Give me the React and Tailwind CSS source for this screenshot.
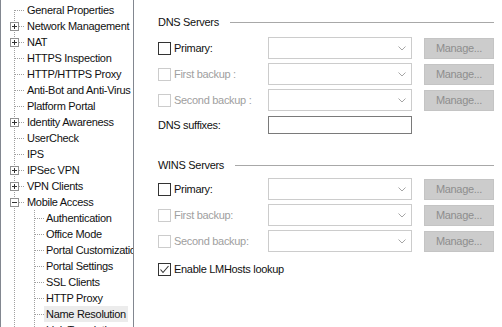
import React from 'react';

const tree = [
  { label: 'General Properties', level: 0, first: true },
  { label: 'Network Management', level: 0, box: '+' },
  { label: 'NAT', level: 0, box: '+' },
  { label: 'HTTPS Inspection', level: 0 },
  { label: 'HTTP/HTTPS Proxy', level: 0 },
  { label: 'Anti-Bot and Anti-Virus', level: 0 },
  { label: 'Platform Portal', level: 0 },
  { label: 'Identity Awareness', level: 0, box: '+' },
  { label: 'UserCheck', level: 0 },
  { label: 'IPS', level: 0 },
  { label: 'IPSec VPN', level: 0, box: '+' },
  { label: 'VPN Clients', level: 0, box: '+' },
  { label: 'Mobile Access', level: 0, box: '-' },
  { label: 'Authentication', level: 1 },
  { label: 'Office Mode', level: 1 },
  { label: 'Portal Customization', level: 1 },
  { label: 'Portal Settings', level: 1 },
  { label: 'SSL Clients', level: 1 },
  { label: 'HTTP Proxy', level: 1 },
  { label: 'Name Resolution', level: 1, selected: true },
  { label: 'Link Translation', level: 1 },
];

const DOT = '#a0a0a0';

function TreeLines({ item }) {
  const w = item.level === 0 ? 24 : 43;
  return (
    <svg width={w} height="16" className="shrink-0" shapeRendering="crispEdges">
      <line x1="13.5" y1={item.first ? 8 : 0} x2="13.5" y2="16" stroke={DOT} strokeDasharray="1 1" />
      {item.level === 1 && (
        <>
          <line x1="33.5" y1="0" x2="33.5" y2="16" stroke={DOT} strokeDasharray="1 1" />
          <line x1="34" y1="8.5" x2="43" y2="8.5" stroke={DOT} strokeDasharray="1 1" />
        </>
      )}
      {item.level === 0 && (
        <line x1={item.box ? 18 : 14} y1="8.5" x2="24" y2="8.5" stroke={DOT} strokeDasharray="1 1" />
      )}
      {item.box && (
        <>
          <rect x="9.5" y="4.5" width="8" height="8" fill="#fff" stroke="#919191" />
          <line x1="11" y1="8.5" x2="16" y2="8.5" stroke="#333" />
          {item.box === '+' && <line x1="13.5" y1="6" x2="13.5" y2="11" stroke="#333" />}
        </>
      )}
    </svg>
  );
}

function Checkbox({ disabled, checked }) {
  return (
    <span
      className={`w-[13px] h-[13px] shrink-0 border bg-white flex items-center justify-center ${
        disabled ? 'border-[#cccccc]' : 'border-[#333333]'
      }`}
    >
      {checked && (
        <svg width="11" height="11" viewBox="0 0 11 11">
          <polyline points="1.5,5.5 4,8.5 9.5,2" fill="none" stroke="#333" strokeWidth="1.1" />
        </svg>
      )}
    </span>
  );
}

function Combo() {
  return (
    <div className="w-[144px] h-[22px] border border-[#cccccc] bg-white flex items-center justify-end pr-[5px]">
      <svg width="8" height="5" viewBox="0 0 8 5">
        <polyline points="0.5,0.5 4,4 7.5,0.5" fill="none" stroke="#a6a6a6" />
      </svg>
    </div>
  );
}

function ServerRow({ label, disabled }) {
  return (
    <div className="flex items-center h-[22px]">
      <div className="w-[110px] flex items-center gap-[3px]">
        <Checkbox disabled={disabled} />
        <span className={disabled ? 'text-[#a0a0a0]' : 'text-[#111]'}>{label}</span>
      </div>
      <Combo />
      <div className="ml-[12px] w-[70px] h-[21px] bg-[#cccccc] border border-[#c4c4c4] flex items-center justify-center text-[#8e8e8e]">
        Manage...
      </div>
    </div>
  );
}

function SectionHeader({ title }) {
  return (
    <div className="flex items-center h-4 pr-[8px]">
      <span className="text-[#111]">{title}</span>
      <div className="flex-1 ml-[11px] border-t border-[#a8a8a8]" />
    </div>
  );
}

export default function App() {
  return (
    <div
      className="w-[502px] h-[327px] bg-white flex overflow-hidden text-[11px] tracking-[-0.3px] leading-4"
      style={{ fontFamily: '"Liberation Sans", Arial, sans-serif' }}
    >
      {/* Tree panel */}
      <div className="w-[134px] shrink-0 border-l border-r border-[#828790] overflow-hidden pt-[2px]">
        {tree.map((item) => (
          <div key={item.label} className="flex h-4 items-center whitespace-nowrap">
            <TreeLines item={item} />
            <span className={`px-[2px] h-4 text-[#111] ${item.selected ? 'bg-[#ececec]' : ''}`}>
              {item.label}
            </span>
          </div>
        ))}
      </div>

      {/* Settings panel */}
      <div className="flex-1 pl-[24px] pt-[14px]">
        <SectionHeader title="DNS Servers" />
        <div className="mt-[7px] flex flex-col gap-[4px]">
          <ServerRow label="Primary:" />
          <ServerRow label="First backup :" disabled />
          <ServerRow label="Second backup :" disabled />
        </div>
        <div className="mt-[5px] flex items-center">
          <span className="w-[110px] text-[#111]">DNS suffixes:</span>
          <div className="w-[144px] h-[18px] border border-[#7a7a7a] bg-white" />
        </div>

        <div className="mt-[23px]">
          <SectionHeader title="WINS Servers" />
        </div>
        <div className="mt-[5px] flex flex-col gap-[4px]">
          <ServerRow label="Primary:" />
          <ServerRow label="First backup:" disabled />
          <ServerRow label="Second backup:" disabled />
        </div>
        <div className="mt-[9px] flex items-center h-4 gap-[3px]">
          <Checkbox checked />
          <span className="text-[#111]">Enable LMHosts lookup</span>
        </div>
      </div>
    </div>
  );
}
